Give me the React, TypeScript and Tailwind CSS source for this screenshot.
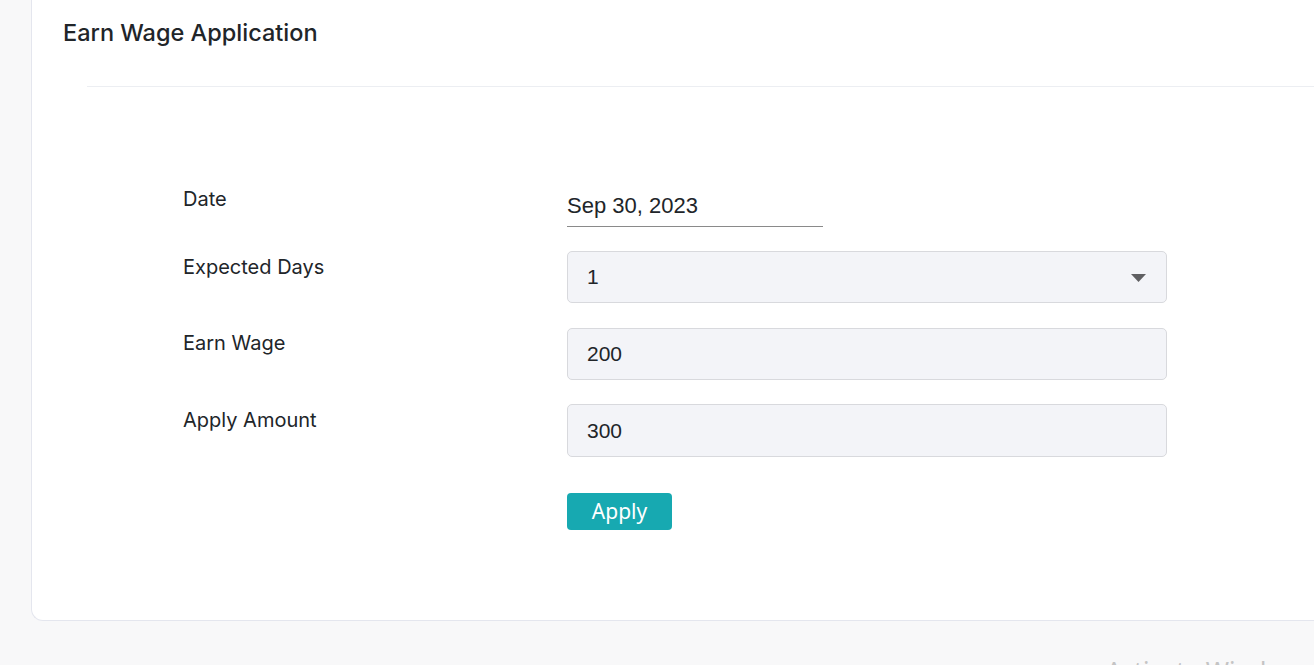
export default function App() {
  return (
    <div className="relative h-[665px] w-full overflow-hidden bg-[#f8f8f9] font-['Inter',sans-serif] text-[#212529]">
      <div className="ml-[31px] h-[621px] w-[1320px] rounded-bl-[12px] border-b border-l border-[#e4e6ee] bg-white">
        <h1 className="pl-[31px] pt-[18px] text-[23.5px] font-medium leading-[30px]">
          Earn Wage Application
        </h1>
        <div className="ml-[55px] mt-[38px] border-t border-[#eceef2]" />

        <div className="ml-[151px] mt-[100px] flex flex-col">
          <div className="flex">
            <label className="w-[384px] text-[20px] leading-[24px]">Date</label>
            <div className="w-[256px] border-b border-[#8a8a8a] pt-[7px] pb-[8px] font-['Liberation_Sans',sans-serif] text-[22px] leading-[24px]">
              Sep 30, 2023
            </div>
          </div>

          <div className="mt-[24px] flex">
            <label className="w-[384px] pt-[3px] text-[20px] leading-[26px]">Expected Days</label>
            <div className="flex h-[52px] w-[600px] items-center justify-between rounded-[5px] border border-[#d8d9dd] bg-[#f3f4f8] pl-[19px] pr-[20px] font-['Liberation_Sans',sans-serif] text-[21px]">
              <span>1</span>
              <svg width="15" height="9" viewBox="0 0 15 9" className="mt-[2px]">
                <path d="M0 0 L15 0 L7.5 8 Z" fill="#5f5f62" />
              </svg>
            </div>
          </div>

          <div className="mt-[25px] flex">
            <label className="w-[384px] pt-[2px] text-[20px] leading-[26px]">Earn Wage</label>
            <div className="flex h-[52px] w-[600px] items-center rounded-[5px] border border-[#d8d9dd] bg-[#f3f4f8] pl-[19px] font-['Liberation_Sans',sans-serif] text-[21px]">
              200
            </div>
          </div>

          <div className="mt-[24px] flex">
            <label className="w-[384px] pt-[3px] text-[20px] leading-[26px]">Apply Amount</label>
            <div className="flex h-[53px] w-[600px] items-center rounded-[5px] border border-[#d8d9dd] bg-[#f3f4f8] pl-[19px] font-['Liberation_Sans',sans-serif] text-[21px]">
              300
            </div>
          </div>

          <div className="mt-[36px] flex">
            <div className="w-[384px]" />
            <button className="h-[37px] w-[105px] rounded-[4px] bg-[#17a9b1] font-['Noto_Sans',sans-serif] text-[21px] leading-none text-white">
              Apply
            </button>
          </div>
        </div>
      </div>

      <div className="absolute left-[1106px] top-[652px] whitespace-nowrap font-['Noto_Sans',sans-serif] text-[25px] text-[#c4c4c4]">
        Activate Windows
      </div>
    </div>
  );
}
